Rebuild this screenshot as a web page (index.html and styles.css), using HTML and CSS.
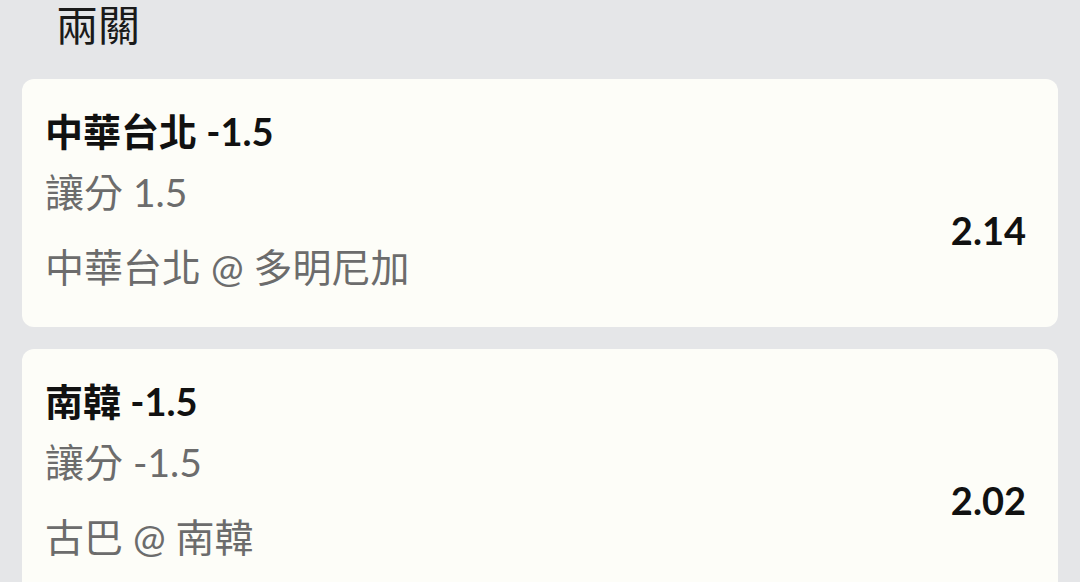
FILE: index.html
```html
<!DOCTYPE html>
<html lang="zh-Hant">
<head>
<meta charset="utf-8">
<link rel="stylesheet" href="styles.css">
</head>
<body>
<div class="page">
  <h1 class="heading">兩關</h1>
  <div class="list">
    <div class="card">
      <div class="title">中華台北 -1.5</div>
      <div class="body">
        <div class="info">
          <div class="line">讓分 1.5</div>
          <div class="line">中華台北 @ 多明尼加</div>
        </div>
        <div class="odds">2.14</div>
      </div>
    </div>
    <div class="card">
      <div class="title">南韓 -1.5</div>
      <div class="body">
        <div class="info">
          <div class="line">讓分 -1.5</div>
          <div class="line">古巴 @ 南韓</div>
        </div>
        <div class="odds">2.02</div>
      </div>
    </div>
  </div>
</div>
</body>
</html>
```

FILE: styles.css
```css
html, body {
  margin: 0;
  padding: 0;
  background: #e5e6e8;
  font-family: Lato, "Noto Sans CJK TC", sans-serif;
  overflow: hidden;
}
.page {
  padding: 0 22px;
}
.heading {
  margin: 0;
  padding-left: 34px;
  font-size: 42px;
  font-weight: 400;
  line-height: 50px;
  color: #1a1a1a;
}
.list {
  display: flex;
  flex-direction: column;
  gap: 22px;
  margin-top: 29px;
}
.card {
  background: #fdfdf8;
  border-radius: 12px;
  padding: 28px 32px 22px 23px;
}
.title {
  font-size: 38px;
  font-weight: 700;
  line-height: 48px;
  color: #111;
}
.body {
  display: flex;
  align-items: center;
  justify-content: space-between;
}
.line {
  font-size: 39px;
  line-height: 75px;
  color: #6c6c6c;
}
.odds {
  font-size: 38px;
  font-weight: 700;
  color: #111;
}
```
